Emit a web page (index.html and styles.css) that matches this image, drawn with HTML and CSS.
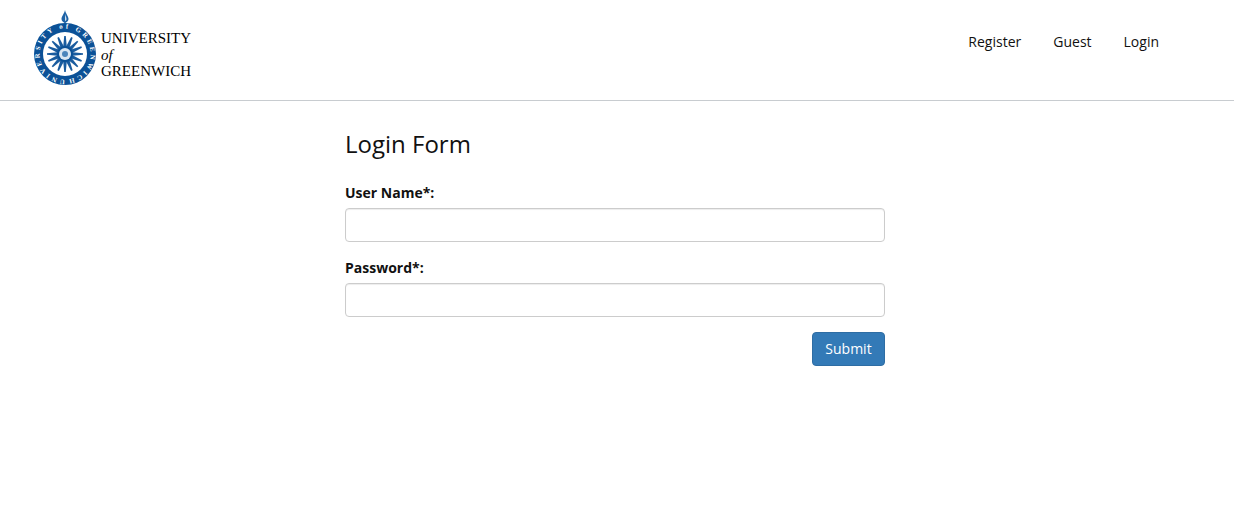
FILE: index.html
```html
<!DOCTYPE html>
<html lang="en">
<head>
    <meta charset="UTF-8">
    <meta name="viewport" content="width=device-width, initial-scale=1.0">
    <title>Login</title>
    <link rel="stylesheet" href="styles.css">
</head>
<body>
    <header class="navbar">
        <a class="brand" href="#">
            <svg class="crest" width="66" height="78" viewBox="0 0 66 78">
                <defs>
                    <path id="ringText" d="M33 69.500 A 25.500 25.500 0 1 1 33.010 69.500"/>
                    <polygon id="ray" points="32.200,21 33.800,21 35,34 33,39 31,34" fill="#1a5c9f"/>
                </defs>
                <path d="M33 0 C33.800 4 36.500 6 36.500 9 C36.500 11 35 12 34 12.500 L33.500 13 L32.500 13 L32 12.500 C31 12 29.500 11 29.500 9 C29.500 6 32.200 4 33 0 Z" fill="#1d62a6"/>
                <path d="M33 4 C33.500 6 34.500 7.500 34.500 9 C34.500 10.200 33.800 11 33 11 Z" fill="#cfe0f0"/>
                <circle cx="33" cy="44" r="31" fill="#0b5197"/>
                <circle cx="33" cy="44" r="22" fill="#fff"/>
                <text class="ring-text">
                    <textPath href="#ringText" textLength="156">UNIVERSITY of GREENWICH</textPath>
                </text>
                <g>
                    <use href="#ray" transform="translate(0 5)"/>
                    <use href="#ray" transform="translate(0 5) rotate(22.500 33 39)"/>
                    <use href="#ray" transform="translate(0 5) rotate(45 33 39)"/>
                    <use href="#ray" transform="translate(0 5) rotate(67.500 33 39)"/>
                    <use href="#ray" transform="translate(0 5) rotate(90 33 39)"/>
                    <use href="#ray" transform="translate(0 5) rotate(112.500 33 39)"/>
                    <use href="#ray" transform="translate(0 5) rotate(135 33 39)"/>
                    <use href="#ray" transform="translate(0 5) rotate(157.500 33 39)"/>
                    <use href="#ray" transform="translate(0 5) rotate(180 33 39)"/>
                    <use href="#ray" transform="translate(0 5) rotate(202.500 33 39)"/>
                    <use href="#ray" transform="translate(0 5) rotate(225 33 39)"/>
                    <use href="#ray" transform="translate(0 5) rotate(247.500 33 39)"/>
                    <use href="#ray" transform="translate(0 5) rotate(270 33 39)"/>
                    <use href="#ray" transform="translate(0 5) rotate(292.500 33 39)"/>
                    <use href="#ray" transform="translate(0 5) rotate(315 33 39)"/>
                    <use href="#ray" transform="translate(0 5) rotate(337.500 33 39)"/>
                </g>
                <circle cx="33" cy="44" r="8" fill="#0b5197"/>
                <circle cx="33" cy="44" r="6" fill="#d8e5f2"/>
                <circle cx="33" cy="44" r="3" fill="#4a84bb"/>
            </svg>
            <span class="wordmark">
                <span>UNIVERSITY</span>
                <span class="wordmark-of">of</span>
                <span>GREENWICH</span>
            </span>
        </a>
        <nav class="nav-links">
            <a href="#">Register</a>
            <a href="#">Guest</a>
            <a href="#">Login</a>
        </nav>
    </header>

    <main class="content">
        <h3>Login Form</h3>
        <form>
            <div class="form-group">
                <label for="username">User Name*:</label>
                <input type="text" id="username" name="username">
            </div>
            <div class="form-group">
                <label for="password">Password*:</label>
                <input type="password" id="password" name="password">
            </div>
            <div class="form-actions">
                <button type="submit">Submit</button>
            </div>
        </form>
    </main>
</body>
</html>
```

FILE: styles.css
```css
* {
    box-sizing: border-box;
}

body {
    margin: 0;
    font-family: 'Open Sans', sans-serif;
    font-size: 14px;
    line-height: 20px;
    color: #111;
    background: #fff;
}

.navbar {
    display: flex;
    justify-content: space-between;
    align-items: flex-start;
    height: 101px;
    padding-left: 32px;
    border-bottom: 1px solid #c8ccd0;
}

.brand {
    display: flex;
    align-items: flex-start;
    gap: 3px;
    padding-top: 10px;
    color: #000;
    text-decoration: none;
}

.wordmark {
    display: flex;
    flex-direction: column;
    padding-top: 20px;
    font-family: 'Liberation Serif', serif;
    font-size: 15px;
    line-height: 16.500px;
}

.wordmark-of {
    font-style: italic;
}

.ring-text {
    font-family: 'Liberation Serif', serif;
    font-size: 6.800px;
    font-weight: 700;
    fill: #fff;
}

.nav-links {
    display: flex;
    gap: 32px;
    padding: 32px 75px 0 0;
}

.nav-links a {
    color: #111;
    text-decoration: none;
}

.content {
    width: 540px;
    margin-left: 345px;
}

h3 {
    margin: 26px 0 0;
    font-size: 24px;
    font-weight: 400;
    line-height: 33px;
}

form {
    margin-top: 22px;
}

.form-group {
    margin-bottom: 15px;
}

label {
    display: block;
    margin-bottom: 5px;
    font-weight: 700;
    line-height: 21px;
}

input {
    display: block;
    width: 100%;
    height: 34px;
    padding: 6px 12px;
    border: 1px solid #ccc;
    border-radius: 4px;
    box-shadow: inset 0 1px 1px rgba(0, 0, 0, 0.075);
}

.form-actions {
    display: flex;
    justify-content: flex-end;
}

button {
    width: 73px;
    height: 34px;
    padding: 5px 0 7px;
    font-family: inherit;
    font-size: 14px;
    color: #fff;
    background: #337ab7;
    border: 1px solid #2e6da4;
    border-radius: 4px;
}
```
